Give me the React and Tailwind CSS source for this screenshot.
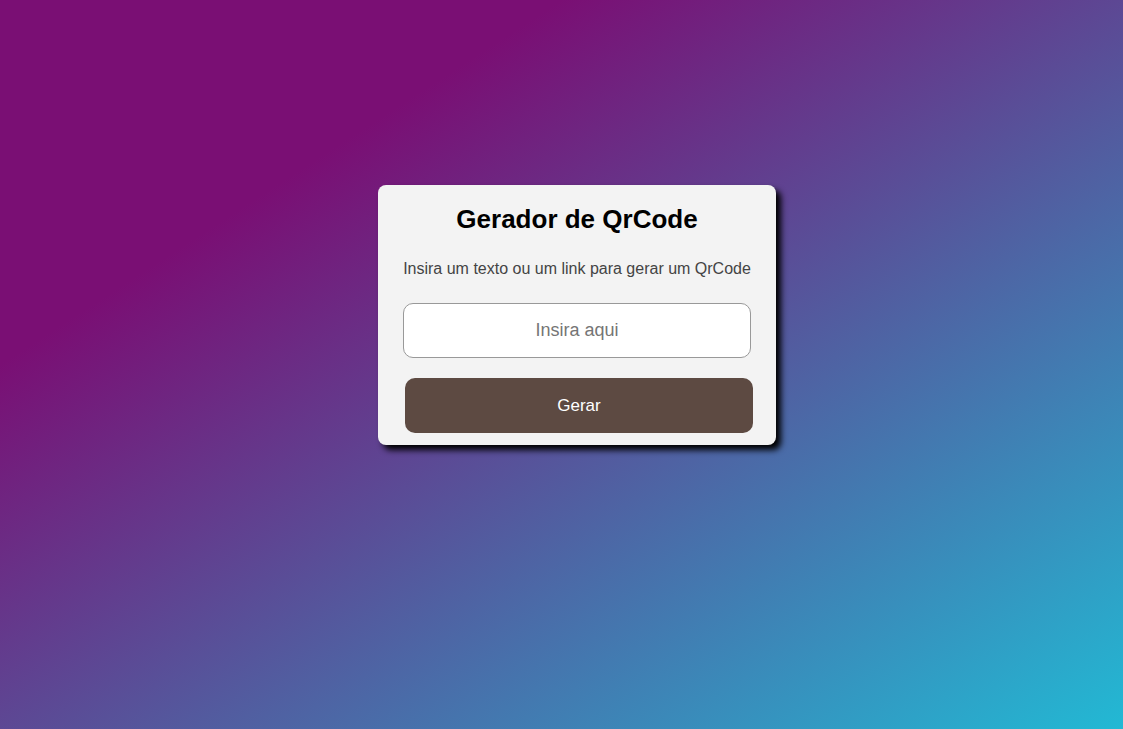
export default function App() {
  return (
    <div className="min-h-screen w-full flex justify-center items-start pt-[185px] pl-[31px] bg-[linear-gradient(to_bottom_right,#7a0f74_25%,#22b9d4)] font-['Liberation_Sans',Arial,sans-serif]">
      <div className="w-[398px] bg-[#f3f3f3] rounded-lg px-[25px] pt-[17px] pb-[12px] shadow-[5px_5px_6px_rgba(0,0,0,1)] flex flex-col items-center">
        <h1 className="text-[26px] font-bold text-black leading-[34px]">Gerador de QrCode</h1>
        <p className="mt-[23px] text-[16px] text-[#444] leading-[20px]">
          Insira um texto ou um link para gerar um QrCode
        </p>
        <input
          type="text"
          placeholder="Insira aqui"
          className="mt-[24px] w-full h-[55px] rounded-[10px] border border-[#999] bg-white text-center text-[18px] text-black placeholder:text-[#757575] outline-none"
        />
        <button className="mt-[20px] ml-[4px] w-full h-[55px] rounded-[10px] bg-[#5d4a42] text-white text-[17px]">
          Gerar
        </button>
      </div>
    </div>
  );
}
